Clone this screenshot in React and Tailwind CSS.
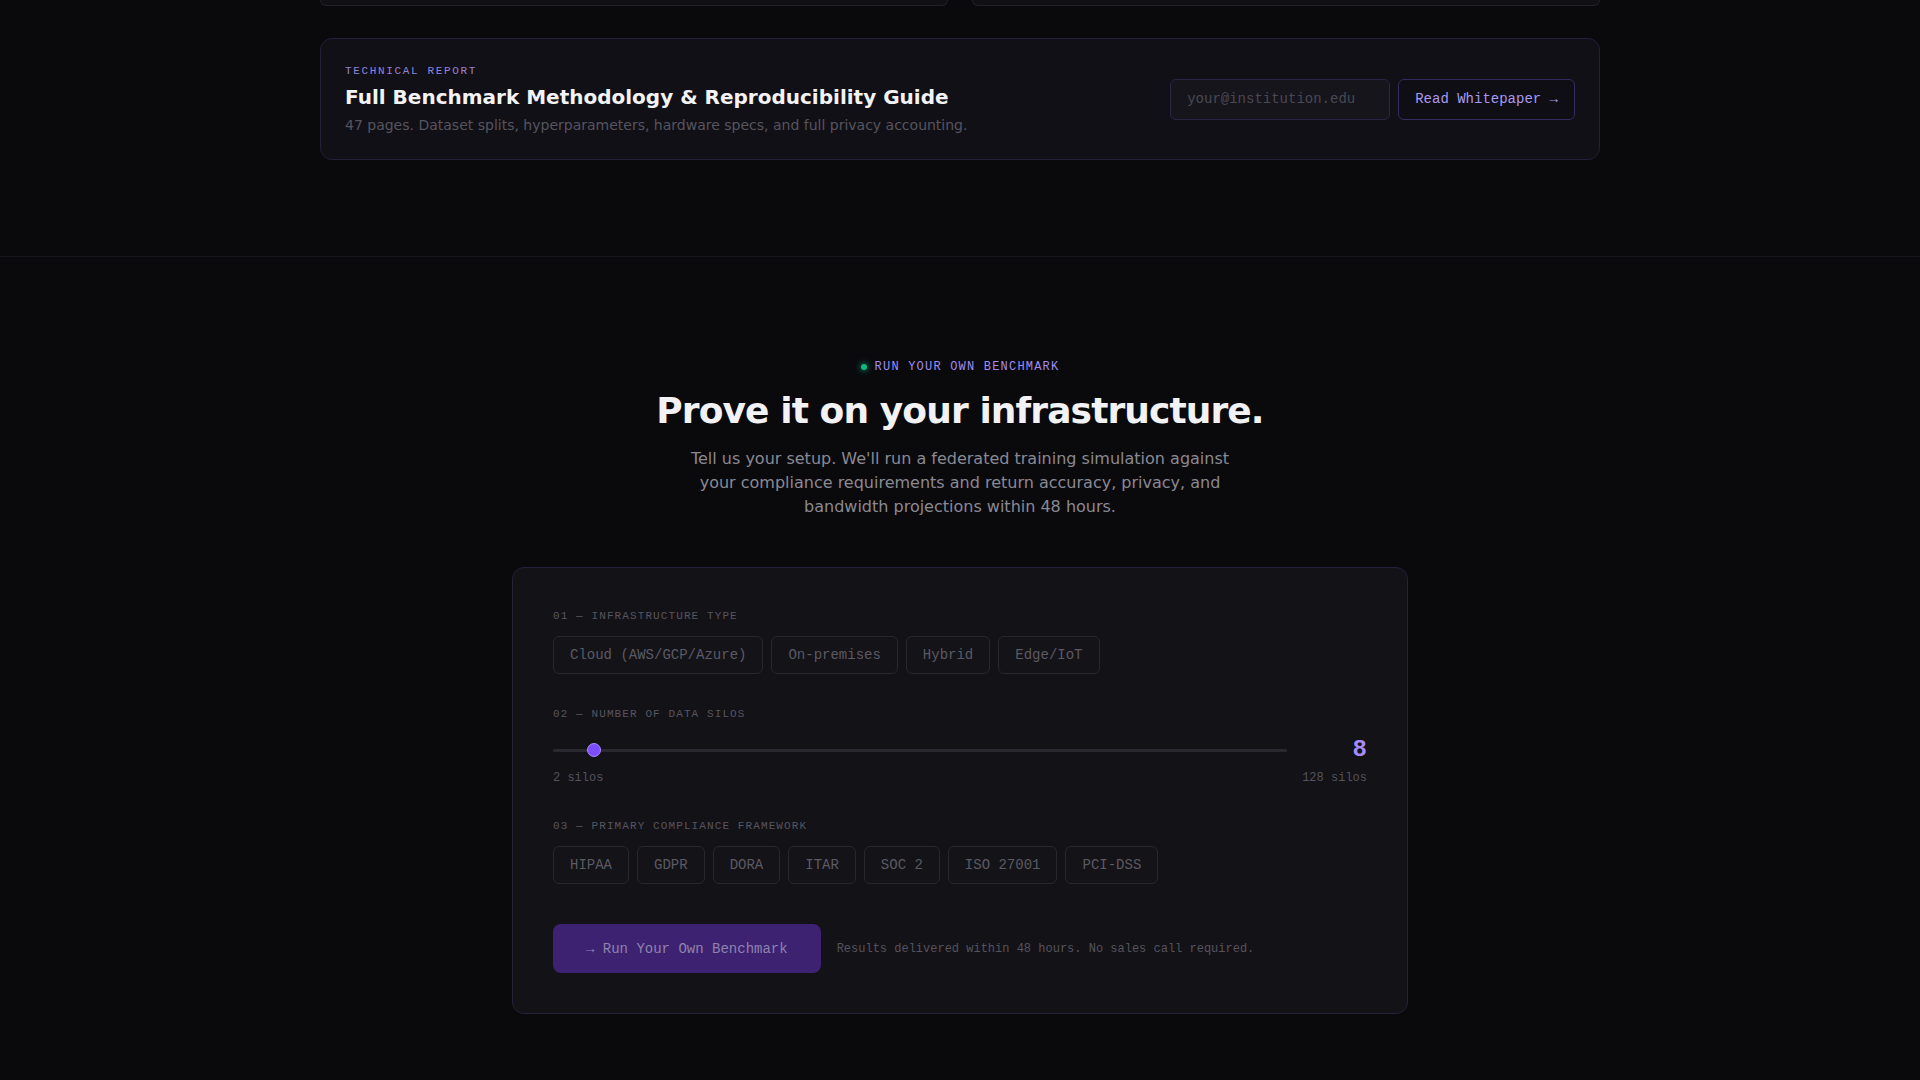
import { useState } from 'react';

const infraOptions = ['Cloud (AWS/GCP/Azure)', 'On-premises', 'Hybrid', 'Edge/IoT'];
const frameworks = ['HIPAA', 'GDPR', 'DORA', 'ITAR', 'SOC 2', 'ISO 27001', 'PCI-DSS'];

const SILO_MIN = 2;
const SILO_MAX = 128;

// Small mono caption used above each form step
const StepLabel = ({ children }) => (
  <p className="font-mono text-[11px] leading-4 tracking-widest text-[#57555f] uppercase mb-3">{children}</p>
);

const Chip = ({ label, active, onClick }) => (
  <button
    onClick={onClick}
    className={`px-4 py-2 rounded-md border font-mono text-sm leading-5 transition-colors ${
      active
        ? 'border-[#6d4fd1] bg-[#221a3d] text-[#c4b5fd]'
        : 'border-[#28272f] bg-[#141318] text-[#5b5a63] hover:border-[#3a3844]'
    }`}
  >
    {label}
  </button>
);

// Custom-drawn range track with a round thumb
const SiloSlider = ({ value }) => {
  const pct = (value - SILO_MIN) / (SILO_MAX - SILO_MIN);
  return (
    <div className="relative flex-1 h-8 flex items-center">
      <div className="w-full h-[3px] rounded-full bg-[#2a2930]" />
      <div
        className="absolute top-1/2 -translate-y-1/2 w-3.5 h-3.5 rounded-full bg-[#7c4dff] border border-[#a78bfa]"
        style={{ left: `calc(${pct} * (100% - 14px))` }}
      />
    </div>
  );
};

const App = () => {
  const [infra, setInfra] = useState(null);
  const [framework, setFramework] = useState(null);
  const silos = 8;

  return (
    <div className="min-h-screen bg-[#0a0a0d] text-white font-['DejaVu_Sans',sans-serif]">
      {/* Report section */}
      <section className="pb-24">
        <div className="max-w-[1280px] mx-auto">
          <div className="grid grid-cols-2 gap-6">
            <div className="h-1.5 rounded-b-xl border border-t-0 border-[#22212a] bg-[#111015]" />
            <div className="h-1.5 rounded-b-xl border border-t-0 border-[#22212a] bg-[#111015]" />
          </div>

          <div className="mt-8 rounded-xl border border-[#241f3a] bg-[#111016] p-6 flex items-center justify-between">
            <div>
              <p className="font-mono text-[11px] leading-4 tracking-[0.15em] text-[#9583d6] uppercase mb-1">Technical Report</p>
              <h3 className="text-xl leading-7 font-bold text-[#f3f3f5]">Full Benchmark Methodology &amp; Reproducibility Guide</h3>
              <p className="mt-1 text-sm leading-5 text-[#56545f]">
                47 pages. Dataset splits, hyperparameters, hardware specs, and full privacy accounting.
              </p>
            </div>
            <div className="flex items-center gap-2">
              <input
                type="email"
                placeholder="your@institution.edu"
                className="w-[220px] h-[41px] px-4 rounded-md border border-[#2b2645] bg-[#16151c] font-mono text-sm text-[#c8c8d0] placeholder:text-[#4a4854] outline-none"
              />
              <button className="h-[41px] px-4 rounded-md border border-[#352c62] bg-[#0f0e14] font-mono text-sm text-[#a99af0]">
                Read Whitepaper →
              </button>
            </div>
          </div>
        </div>
      </section>

      {/* Benchmark request section */}
      <section className="border-t border-[#17161c] pt-[102px] pb-16">
        <div className="flex flex-col items-center text-center">
          <div className="flex items-center gap-2">
            <span className="w-1.5 h-1.5 rounded-full bg-[#10b981] shadow-[0_0_6px_#10b981]" />
            <span className="font-mono text-xs leading-4 tracking-widest text-[#a08cf0]">RUN YOUR OWN BENCHMARK</span>
          </div>
          <h2 className="mt-4 text-4xl leading-10 font-bold tracking-tight text-[#f2f2f4]">Prove it on your infrastructure.</h2>
          <p className="mt-4 max-w-[560px] text-base leading-6 text-[#8a8993]">
            Tell us your setup. We'll run a federated training simulation against your compliance requirements and return
            accuracy, privacy, and bandwidth projections within 48 hours.
          </p>
        </div>

        <div className="mt-12 max-w-4xl mx-auto rounded-xl border border-[#24213a] bg-[#131217] p-10">
          <div className="flex flex-col gap-8">
            <div>
              <StepLabel>01 — Infrastructure type</StepLabel>
              <div className="flex flex-wrap gap-2">
                {infraOptions.map((opt) => (
                  <Chip key={opt} label={opt} active={infra === opt} onClick={() => setInfra(opt)} />
                ))}
              </div>
            </div>

            <div>
              <StepLabel>02 — Number of data silos</StepLabel>
              <div className="flex items-center gap-4">
                <SiloSlider value={silos} />
                <span className="w-16 text-right font-mono text-2xl leading-8 font-bold text-[#a78bfa]">{silos}</span>
              </div>
              <div className="mt-1 flex justify-between font-mono text-xs leading-4 text-[#55535d]">
                <span>{SILO_MIN} silos</span>
                <span>{SILO_MAX} silos</span>
              </div>
            </div>

            <div>
              <StepLabel>03 — Primary compliance framework</StepLabel>
              <div className="flex flex-wrap gap-2">
                {frameworks.map((fw) => (
                  <Chip key={fw} label={fw} active={framework === fw} onClick={() => setFramework(fw)} />
                ))}
              </div>
            </div>

            <div className="pt-2 flex items-center gap-4">
              <button className="h-[49px] px-[33px] rounded-lg bg-[#3d2272] font-mono text-sm leading-5 text-[#8e83ad]">
                → Run Your Own Benchmark
              </button>
              <span className="font-mono text-xs text-[#55535d]">Results delivered within 48 hours. No sales call required.</span>
            </div>
          </div>
        </div>
      </section>
    </div>
  );
};

export default App;
